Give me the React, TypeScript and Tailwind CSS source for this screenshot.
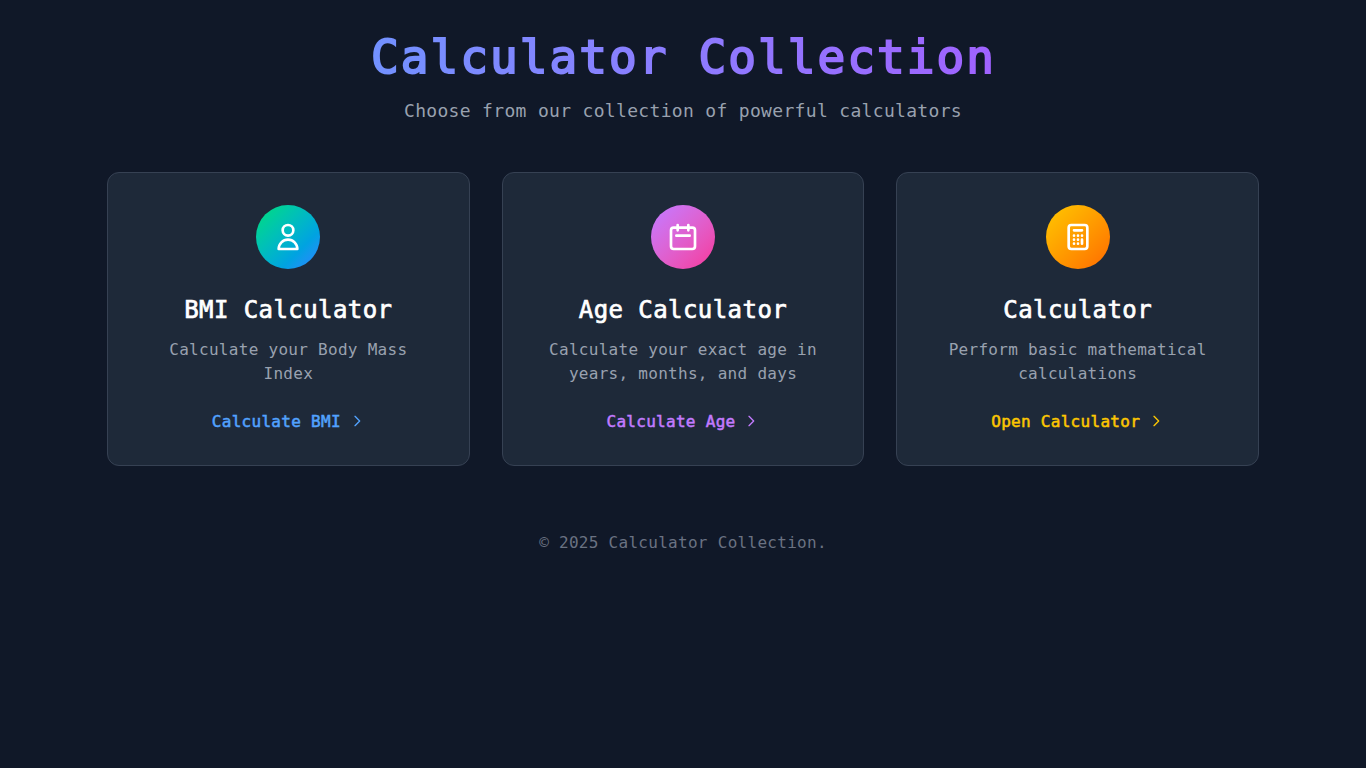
type Tool = {
  title: string;
  text: string;
  action: string;
  circle: string;
  link: string;
  icon: string;
};

const tools: Tool[] = [
  {
    title: 'BMI Calculator',
    text: 'Calculate your Body Mass Index',
    action: 'Calculate BMI',
    circle: 'from-green-400 to-blue-500',
    link: 'text-blue-400',
    icon: 'M16 7a4 4 0 11-8 0 4 4 0 018 0zM12 14a7 7 0 00-7 7h14a7 7 0 00-7-7z',
  },
  {
    title: 'Age Calculator',
    text: 'Calculate your exact age in years, months, and days',
    action: 'Calculate Age',
    circle: 'from-purple-400 to-pink-500',
    link: 'text-purple-400',
    icon: 'M8 7V3m8 4V3m-9 8h10M5 21h14a2 2 0 002-2V7a2 2 0 00-2-2H5a2 2 0 00-2 2v12a2 2 0 002 2z',
  },
  {
    title: 'Calculator',
    text: 'Perform basic mathematical calculations',
    action: 'Open Calculator',
    circle: 'from-yellow-400 to-orange-500',
    link: 'text-yellow-400',
    icon: 'M9 7h6m0 10v-3m-3 3h.01M9 17h.01M9 14h.01M12 14h.01M15 11h.01M12 11h.01M9 11h.01M7 21h10a2 2 0 002-2V5a2 2 0 00-2-2H7a2 2 0 00-2 2v14a2 2 0 002 2z',
  },
];

function Icon({ d, className }: { d: string; className: string }) {
  return (
    <svg className={className} fill="none" stroke="currentColor" viewBox="0 0 24 24">
      <path d={d} strokeWidth={2} strokeLinecap="round" strokeLinejoin="round" />
    </svg>
  );
}

function Card({ tool }: { tool: Tool }) {
  return (
    <a href="#" className="rounded-xl border border-gray-700 bg-gray-800 px-8 pt-8 pb-[31px] text-center">
      <div className={`mx-auto mb-[25px] flex h-16 w-16 items-center justify-center rounded-full bg-gradient-to-br ${tool.circle}`}>
        <Icon d={tool.icon} className="h-8 w-8 text-white" />
      </div>
      <h2 className="mb-3 text-2xl tracking-[0.018em] text-white [-webkit-text-stroke:0.7px_currentColor]">{tool.title}</h2>
      <p className="mb-[22px] tracking-[0.018em] text-gray-400">{tool.text}</p>
      <div className={`flex items-center justify-center ${tool.link}`}>
        <span className="pt-0.5 tracking-[0.018em] [-webkit-text-stroke:0.5px_currentColor]">{tool.action}</span>
        <Icon d="M9 5l7 7-7 7" className="ml-2 h-4 w-4" />
      </div>
    </a>
  );
}

export default function App() {
  return (
    <div className="min-h-screen bg-gray-900 py-8 font-['DejaVu_Sans_Mono',monospace] text-base text-white">
      <div className="mx-auto w-full max-w-6xl">
        <header className="mb-[47px] text-center">
          <h1 className="mb-[15px] bg-gradient-to-r from-blue-400 to-purple-500 bg-clip-text pl-px text-[46px] leading-[50px] tracking-[2.07px] text-transparent [-webkit-text-stroke:2px_transparent]">
            Calculator Collection
          </h1>
          <p className="text-lg tracking-[0.018em] text-gray-400">Choose from our collection of powerful calculators</p>
        </header>
        <main className="grid grid-cols-3 gap-8">
          {tools.map((tool) => (
            <Card key={tool.title} tool={tool} />
          ))}
        </main>
        <footer className="mt-[65px] text-center tracking-[0.018em] text-gray-500">© 2025 Calculator Collection.</footer>
      </div>
    </div>
  );
}
